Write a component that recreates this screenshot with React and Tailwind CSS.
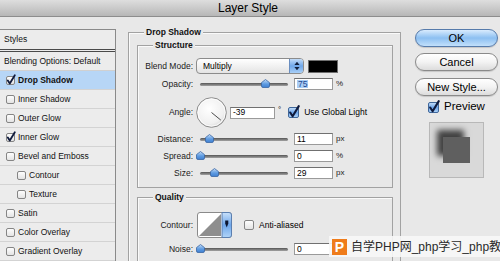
import React from "react";

const F = "font-['Liberation_Sans',Arial,sans-serif]";

function Defs() {
  return (
    <svg width="0" height="0" className="absolute">
      <defs>
        <linearGradient id="aq" x1="0" y1="0" x2="0" y2="1">
          <stop offset="0" stopColor="#c9e1fa" />
          <stop offset="0.5" stopColor="#6ea6ea" />
          <stop offset="1" stopColor="#b0d4f8" />
        </linearGradient>
        <linearGradient id="wb" x1="0" y1="0" x2="0" y2="1">
          <stop offset="0" stopColor="#ffffff" />
          <stop offset="1" stopColor="#e2e2e2" />
        </linearGradient>
        <linearGradient id="th" x1="0" y1="0" x2="0" y2="1">
          <stop offset="0" stopColor="#c4dcf6" />
          <stop offset="0.55" stopColor="#5f9ce2" />
          <stop offset="1" stopColor="#3f7fd0" />
        </linearGradient>
        <radialGradient id="dg" cx="0.42" cy="0.38" r="0.7">
          <stop offset="0" stopColor="#ffffff" />
          <stop offset="0.7" stopColor="#f0f0f0" />
          <stop offset="1" stopColor="#d2d2d2" />
        </radialGradient>
      </defs>
    </svg>
  );
}

function Check({ checked, size = 9, aqua }) {
  const s = size;
  const blue = aqua && checked;
  return (
    <svg width={s} height={s} viewBox={`0 0 ${s} ${s}`} className="shrink-0 overflow-visible">
      <rect
        x="0.5"
        y="0.5"
        width={s - 1}
        height={s - 1}
        rx="1.5"
        fill={blue ? "url(#aq)" : "url(#wb)"}
        stroke={blue ? "#3f6699" : "#858585"}
      />
      {checked && (
        <path
          d={`M${s * 0.2} ${s * 0.5} L${s * 0.42} ${s * 0.84} L${s * 0.98} ${-s * 0.08}`}
          fill="none"
          stroke="#0f1a3c"
          strokeWidth={s > 10 ? 2.1 : 1.8}
          strokeLinecap="round"
          strokeLinejoin="round"
        />
      )}
    </svg>
  );
}

function Label({ children }) {
  return <div className="w-[55px] shrink-0 text-right text-[8.5px] leading-none text-[#1a1a1a]">{children}</div>;
}

function Slider({ pos }) {
  return (
    <div className="relative ml-[7px] h-[3px] w-[88px] shrink-0 rounded-full bg-linear-to-b from-[#555555] to-[#a3a3a3]">
      <svg width="9" height="9" viewBox="0 0 9 9" className="absolute top-[-4px]" style={{ left: pos - 4.5 }}>
        <path
          d="M4.5 0.5 L8.5 3.6 L8.5 7 Q8.5 8.5 7 8.5 L2 8.5 Q0.5 8.5 0.5 7 L0.5 3.6 Z"
          fill="url(#th)"
          stroke="#3a66a3"
          strokeWidth="0.8"
        />
      </svg>
    </div>
  );
}

function Field({ children }) {
  return (
    <div className="ml-[6px] w-[39px] h-[12px] shrink-0 bg-white border border-[#9a9a9a] border-t-[#707070] flex items-center pl-[2px] text-[8.5px] leading-none">
      {children}
    </div>
  );
}

function Unit({ children }) {
  return <span className="ml-[3px] text-[8px] leading-none text-[#222]">{children}</span>;
}

const items = [
  { label: "Drop Shadow", checked: true, active: true },
  { label: "Inner Shadow" },
  { label: "Outer Glow" },
  { label: "Inner Glow", checked: true },
  { label: "Bevel and Emboss" },
  { label: "Contour", indent: true },
  { label: "Texture", indent: true },
  { label: "Satin" },
  { label: "Color Overlay" },
  { label: "Gradient Overlay" },
];

function LeftPanel() {
  return (
    <div className="w-[116px] shrink-0 border-t border-r border-[#8a8a8a] bg-[#ececec] text-[8.5px] leading-none text-[#111]">
      <div className="h-[22px] border-b-[3px] border-double border-[#4a4a4a] flex items-center pl-[4px]">Styles</div>
      <div className="h-[19px] border-b border-[#d0d0d0] flex items-center pl-[4px]">Blending Options: Default</div>
      {items.map((it) => (
        <div
          key={it.label}
          className={`h-[19px] border-b border-[#d3d3d3] flex items-center gap-[3px] ${it.indent ? "pl-[17px]" : "pl-[6px]"} ${
            it.active ? "bg-[#b7d6f6] font-bold" : ""
          }`}
        >
          <Check checked={it.checked} />
          <span>{it.label}</span>
        </div>
      ))}
    </div>
  );
}

function Legend({ children }) {
  return (
    <legend className="ml-[15px] px-[2px] bg-[#e8e8e8] text-[8.5px] leading-[11px] font-bold text-[#111]">{children}</legend>
  );
}

function Middle() {
  return (
    <fieldset className="ml-[12px] mt-[-2px] w-[273px] shrink-0 border border-[#a2a2a2] shadow-[inset_1px_1px_0_#fafafa]">
      <Legend>Drop Shadow</Legend>
      <div className="pl-[8px] pr-[7px] pb-[30px]">
        <fieldset className="mt-[2px] border border-[#a2a2a2] shadow-[inset_1px_1px_0_#fafafa]">
          <Legend>Structure</Legend>
          <div className="pt-[7px] pb-[8px]">
            <div className="h-[16px] flex items-center">
              <Label>Blend Mode:</Label>
              <div className="ml-[3px] w-[108px] h-[16px] shrink-0 rounded-[4px] border border-[#8c8c8c] bg-linear-to-b from-white to-[#e4e4e4] flex items-center overflow-hidden">
                <span className="pl-[6px] flex-1 text-[8.5px] leading-none">Multiply</span>
                <div className="w-[14px] h-full border-l border-[#6a8ec0] bg-linear-to-b from-[#c3dcf7] via-[#6fa7e9] to-[#a9cff6] flex items-center justify-center">
                  <svg width="6" height="10" viewBox="0 0 6 10">
                    <path d="M3 0.8 L5.6 4 H0.4 Z M3 9.2 L5.6 6 H0.4 Z" fill="#13213d" />
                  </svg>
                </div>
              </div>
              <div className="ml-[4px] w-[30px] h-[13px] bg-black border border-[#6f6f6f]" />
            </div>

            <div className="mt-[4px] h-[12px] flex items-center">
              <Label>Opacity:</Label>
              <Slider pos={65} />
              <Field>
                <span className="bg-[#a9cdf5] text-[#1d4890] px-[1px]">75</span>
              </Field>
              <Unit>%</Unit>
            </div>

            <div className="mt-[7px] h-[31px] flex items-center">
              <Label>Angle:</Label>
              <svg width="31" height="31" viewBox="0 0 31 31" className="ml-[3px] shrink-0">
                <circle cx="15.5" cy="15.5" r="14.8" fill="url(#dg)" stroke="#8a8a8a" />
                <circle cx="15.5" cy="15.5" r="13.6" fill="none" stroke="#ffffff" strokeWidth="0.8" />
                <line x1="15.5" y1="15.5" x2="24.8" y2="23.1" stroke="#4a4a4a" strokeWidth="1" />
              </svg>
              <div className="ml-[3px] w-[45px] h-[12px] shrink-0 bg-white border border-[#9a9a9a] border-t-[#707070] flex items-center pl-[2px] text-[8.5px] leading-none">
                -39
              </div>
              <span className="ml-[3px] self-start mt-[9px] text-[8px] leading-none">°</span>
              <div className="ml-[7px]">
                <Check checked aqua size={11} />
              </div>
              <span className="ml-[5px] text-[8.5px] leading-none">Use Global Light</span>
            </div>

            <div className="mt-[5px] h-[12px] flex items-center">
              <Label>Distance:</Label>
              <Slider pos={9} />
              <Field>11</Field>
              <Unit>px</Unit>
            </div>
            <div className="mt-[5px] h-[12px] flex items-center">
              <Label>Spread:</Label>
              <Slider pos={0} />
              <Field>0</Field>
              <Unit>%</Unit>
            </div>
            <div className="mt-[5px] h-[12px] flex items-center">
              <Label>Size:</Label>
              <Slider pos={14} />
              <Field>29</Field>
              <Unit>px</Unit>
            </div>
          </div>
        </fieldset>

        <fieldset className="mt-[4px] border border-[#a2a2a2] shadow-[inset_1px_1px_0_#fafafa]">
          <Legend>Quality</Legend>
          <div className="pt-[9px] pb-[20px]">
            <div className="h-[26px] flex items-center">
              <Label>Contour:</Label>
              <svg width="35" height="26" viewBox="0 0 35 26" className="ml-[4px] shrink-0">
                <rect x="0.5" y="0.5" width="34" height="25" rx="2.5" fill="#fff" stroke="#8a8a8a" />
                <polygon points="2,24 24,2 24,24" fill="#8e8e8e" />
                <path d="M25 0.5 H32 Q34.5 0.5 34.5 3 V23 Q34.5 25.5 32 25.5 H25 Z" fill="url(#aq)" stroke="#5b7fb0" />
                <path d="M28.2 8.5 H31.3 V11.5 L29.75 15.5 L28.2 11.5 Z" fill="#0c1530" />
              </svg>
              <div className="ml-[12px]">
                <Check size={10} />
              </div>
              <span className="ml-[5px] text-[8.5px] leading-none">Anti-aliased</span>
            </div>
            <div className="mt-[5px] h-[12px] flex items-center">
              <Label>Noise:</Label>
              <Slider pos={0} />
              <Field>0</Field>
            </div>
          </div>
        </fieldset>
      </div>
    </fieldset>
  );
}

function Right() {
  const btn =
    "h-[18px] w-[83px] rounded-full border text-[11px] leading-none flex items-center justify-center shadow-[0_1px_1px_rgba(0,0,0,0.15)]";
  return (
    <div className="ml-[14px] w-[83px] shrink-0 flex flex-col">
      <button className={`${btn} border-[#567bab] bg-linear-to-b from-[#d9ebfd] via-[#8cbff1] to-[#c2e0fb]`}>OK</button>
      <button className={`${btn} mt-[6px] border-[#8a8a8a] bg-linear-to-b from-white via-[#f3f3f3] to-[#dcdcdc]`}>Cancel</button>
      <button className={`${btn} mt-[7px] border-[#8a8a8a] bg-linear-to-b from-white via-[#f3f3f3] to-[#dcdcdc]`}>New Style...</button>
      <div className="mt-[5px] ml-[13px] h-[12px] flex items-center gap-[5px] text-[11.5px] leading-none">
        <Check checked aqua size={11} />
        <span>Preview</span>
      </div>
      <div className="mt-[9px] ml-[14px] w-[55px] h-[56px] border border-[#b8b8b8] bg-[#d9d9d9] flex items-center justify-center">
        <div className="w-[27px] h-[26px] bg-[#5f5f5f] shadow-[-6px_-7px_6px_rgba(0,0,0,0.7)]" />
      </div>
    </div>
  );
}

function Watermark() {
  return (
    <div className="absolute left-[329px] top-[236px] w-[171px] h-[21px] overflow-hidden bg-[#f7f7f7]/90 flex items-center pl-[3px] whitespace-nowrap">
      <div className="w-[15px] h-[16px] shrink-0 bg-[#ef7c1b] flex items-center justify-center text-white font-bold text-[14px] leading-none">
        P
      </div>
      <span className="ml-[4px] text-[12px] leading-none text-[#2a2a2a] font-['Liberation_Sans','Noto_Sans_CJK_SC',sans-serif]">
        自学PHP网_php学习_php教程
      </span>
    </div>
  );
}

export default function App() {
  return (
    <div className={`${F} relative w-[500px] h-[261px] overflow-hidden bg-[#e8e8e8] text-black`}>
      <Defs />
      <div className="h-[17px] border-b border-[#8d8d8d] bg-linear-to-b from-[#dedede] to-[#b7b7b7] flex items-center justify-center text-[12px] leading-none pr-[4px]">
        Layer Style
      </div>
      <div className="flex items-start pt-[12px]">
        <LeftPanel />
        <Middle />
        <Right />
      </div>
      <Watermark />
    </div>
  );
}
